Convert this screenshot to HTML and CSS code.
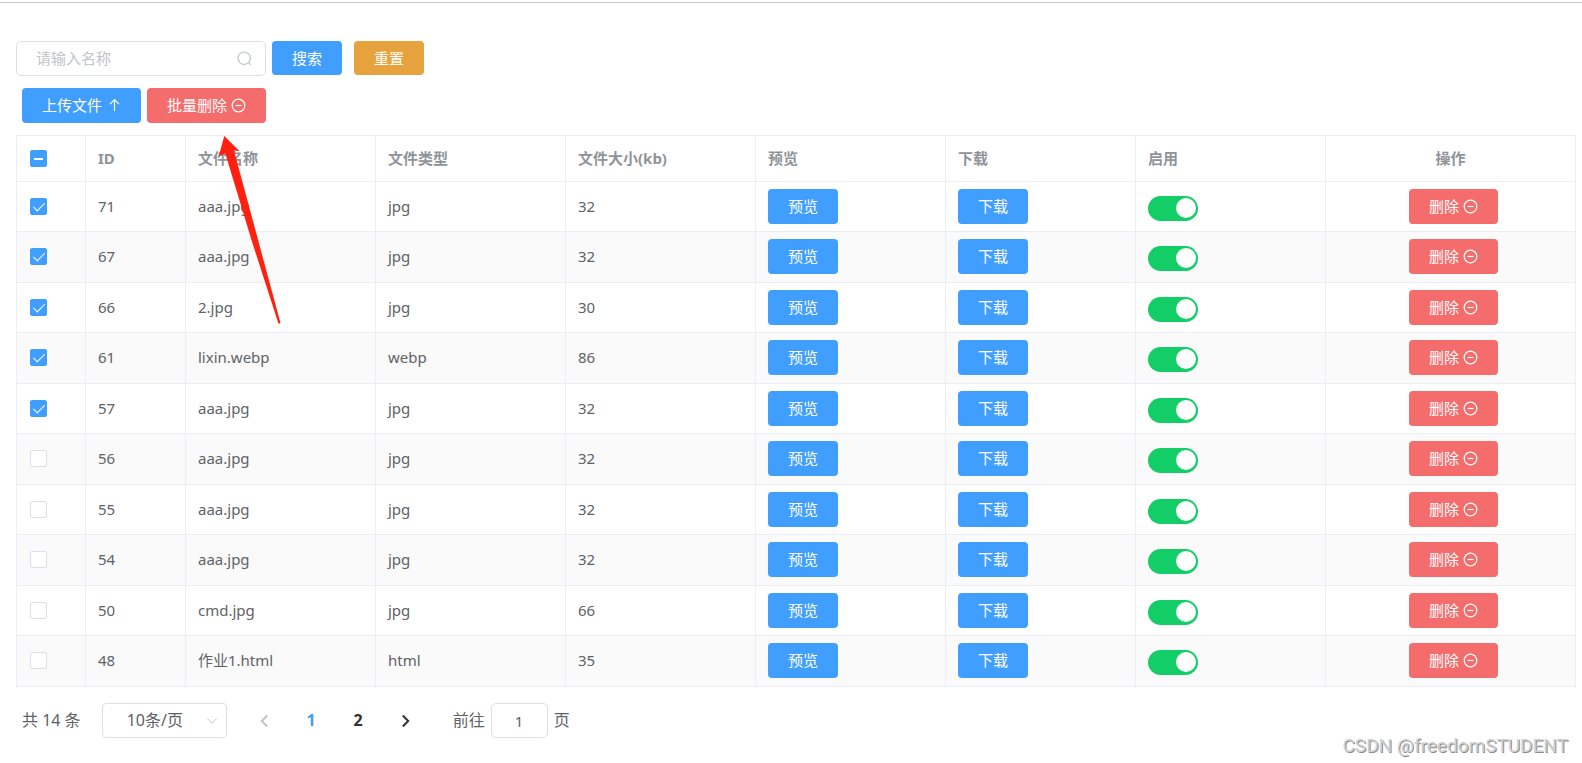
FILE: index.html
```html
<!DOCTYPE html>
<html lang="zh-CN">
<head>
<meta charset="utf-8">
<title>文件管理</title>
<link rel="stylesheet" href="styles.css">
</head>
<body>
<svg class="sprite" aria-hidden="true">
  <symbol id="remove" viewBox="0 0 15 15"><circle cx="7.5" cy="7.5" r="6.3"/><path d="M4.5 7.5h6"/></symbol>
  <symbol id="up" viewBox="0 0 15 15"><path d="M8.5 13V1.8M4 6.2l4.500-4.500L13 6.200"/></symbol>
  <symbol id="search" viewBox="0 0 15 15"><circle cx="7.200" cy="7.200" r="6.200"/><path d="M11.600 11.600l2.200 2.200"/></symbol>
</svg>
<main class="page">
  <form class="toolbar">
    <div class="search">
      <input class="search-input" type="text" placeholder="请输入名称" aria-label="名称">
      <svg class="icon search-icon"><use href="#search"/></svg>
    </div>
    <button class="btn primary" type="button">搜索</button>
    <button class="btn warning" type="button">重置</button>
  </form>
  <div class="actions">
    <button class="btn primary" type="button">上传文件<svg class="icon"><use href="#up"/></svg></button>
    <button class="btn danger" type="button">批量删除<svg class="icon"><use href="#remove"/></svg></button>
  </div>
  <table class="files">
    <colgroup><col class="col-check"><col class="col-id"><col><col><col><col><col><col><col class="col-ops"></colgroup>
    <thead>
      <tr><th><input class="check partial" type="checkbox" aria-label="全选"></th><th>ID</th><th>文件名称</th><th>文件类型</th><th>文件大小(kb)</th><th>预览</th><th>下载</th><th>启用</th><th class="ops-head">操作</th></tr>
    </thead>
    <tbody>
      <tr><td><input class="check" type="checkbox" aria-label="选择 71" checked></td><td>71</td><td>aaa.jpg</td><td>jpg</td><td>32</td><td><button class="btn primary" type="button">预览</button></td><td><button class="btn primary" type="button">下载</button></td><td><input class="switch" type="checkbox" aria-label="启用 71" checked></td><td class="ops"><button class="btn danger" type="button">删除<svg class="icon"><use href="#remove"/></svg></button></td></tr>
      <tr><td><input class="check" type="checkbox" aria-label="选择 67" checked></td><td>67</td><td>aaa.jpg</td><td>jpg</td><td>32</td><td><button class="btn primary" type="button">预览</button></td><td><button class="btn primary" type="button">下载</button></td><td><input class="switch" type="checkbox" aria-label="启用 67" checked></td><td class="ops"><button class="btn danger" type="button">删除<svg class="icon"><use href="#remove"/></svg></button></td></tr>
      <tr><td><input class="check" type="checkbox" aria-label="选择 66" checked></td><td>66</td><td>2.jpg</td><td>jpg</td><td>30</td><td><button class="btn primary" type="button">预览</button></td><td><button class="btn primary" type="button">下载</button></td><td><input class="switch" type="checkbox" aria-label="启用 66" checked></td><td class="ops"><button class="btn danger" type="button">删除<svg class="icon"><use href="#remove"/></svg></button></td></tr>
      <tr><td><input class="check" type="checkbox" aria-label="选择 61" checked></td><td>61</td><td>lixin.webp</td><td>webp</td><td>86</td><td><button class="btn primary" type="button">预览</button></td><td><button class="btn primary" type="button">下载</button></td><td><input class="switch" type="checkbox" aria-label="启用 61" checked></td><td class="ops"><button class="btn danger" type="button">删除<svg class="icon"><use href="#remove"/></svg></button></td></tr>
      <tr><td><input class="check" type="checkbox" aria-label="选择 57" checked></td><td>57</td><td>aaa.jpg</td><td>jpg</td><td>32</td><td><button class="btn primary" type="button">预览</button></td><td><button class="btn primary" type="button">下载</button></td><td><input class="switch" type="checkbox" aria-label="启用 57" checked></td><td class="ops"><button class="btn danger" type="button">删除<svg class="icon"><use href="#remove"/></svg></button></td></tr>
      <tr><td><input class="check" type="checkbox" aria-label="选择 56"></td><td>56</td><td>aaa.jpg</td><td>jpg</td><td>32</td><td><button class="btn primary" type="button">预览</button></td><td><button class="btn primary" type="button">下载</button></td><td><input class="switch" type="checkbox" aria-label="启用 56" checked></td><td class="ops"><button class="btn danger" type="button">删除<svg class="icon"><use href="#remove"/></svg></button></td></tr>
      <tr><td><input class="check" type="checkbox" aria-label="选择 55"></td><td>55</td><td>aaa.jpg</td><td>jpg</td><td>32</td><td><button class="btn primary" type="button">预览</button></td><td><button class="btn primary" type="button">下载</button></td><td><input class="switch" type="checkbox" aria-label="启用 55" checked></td><td class="ops"><button class="btn danger" type="button">删除<svg class="icon"><use href="#remove"/></svg></button></td></tr>
      <tr><td><input class="check" type="checkbox" aria-label="选择 54"></td><td>54</td><td>aaa.jpg</td><td>jpg</td><td>32</td><td><button class="btn primary" type="button">预览</button></td><td><button class="btn primary" type="button">下载</button></td><td><input class="switch" type="checkbox" aria-label="启用 54" checked></td><td class="ops"><button class="btn danger" type="button">删除<svg class="icon"><use href="#remove"/></svg></button></td></tr>
      <tr><td><input class="check" type="checkbox" aria-label="选择 50"></td><td>50</td><td>cmd.jpg</td><td>jpg</td><td>66</td><td><button class="btn primary" type="button">预览</button></td><td><button class="btn primary" type="button">下载</button></td><td><input class="switch" type="checkbox" aria-label="启用 50" checked></td><td class="ops"><button class="btn danger" type="button">删除<svg class="icon"><use href="#remove"/></svg></button></td></tr>
      <tr><td><input class="check" type="checkbox" aria-label="选择 48"></td><td>48</td><td>作业1.html</td><td>html</td><td>35</td><td><button class="btn primary" type="button">预览</button></td><td><button class="btn primary" type="button">下载</button></td><td><input class="switch" type="checkbox" aria-label="启用 48" checked></td><td class="ops"><button class="btn danger" type="button">删除<svg class="icon"><use href="#remove"/></svg></button></td></tr>
    </tbody>
  </table>
  <nav class="pager" aria-label="分页">
    <span>共 14 条</span>
    <div class="size">
      <select class="size-select" aria-label="每页条数"><option>10条/页</option></select>
      <svg class="size-arrow" viewBox="0 0 12 8"><path d="M1 1.2l5 5 5-5"/></svg>
    </div>
    <div class="pages">
      <button class="page-btn" type="button" aria-label="上一页" disabled><svg class="chevron" viewBox="0 0 9 14"><path d="M7.200 1.500L1.800 7l5.400 5.500"/></svg></button>
      <button class="page-btn current" type="button">1</button>
      <button class="page-btn" type="button">2</button>
      <button class="page-btn" type="button" aria-label="下一页"><svg class="chevron" viewBox="0 0 9 14"><path d="M1.800 1.500L7.200 7l-5.400 5.500"/></svg></button>
    </div>
    <label class="jump">前往<input class="jump-input" type="text" value="1">页</label>
  </nav>
</main>
<svg class="pointer" viewBox="0 0 64 190" aria-hidden="true"><path d="M6.300 1L21.500 16.300 16 15.500 39.800 104 62.500 188l-2 .8L33.500 105 7.300 18.500.8 21z"/></svg>
<div class="watermark">CSDN @freedomSTUDENT</div>
</body>
</html>
```
FILE: styles.css
```css
* { box-sizing: border-box; }
body {
  margin: 0;
  background: #fff;
  color: #606266;
  font: 15px/23px "Noto Sans", "Noto Sans CJK SC", sans-serif;
}
input, button, select { font: inherit; color: inherit; margin: 0; }
.sprite { position: absolute; width: 0; height: 0; }
.page {
  margin-top: 2px;
  border-top: 1px solid #c8c9cc;
  padding: 38px 6px 24px 16px;
}
.icon {
  width: 15px;
  height: 15px;
  fill: none;
  stroke: currentColor;
  stroke-width: 1.2;
}
.toolbar { display: flex; align-items: flex-start; }
.toolbar .btn { height: 34px; }
.search { position: relative; width: 250px; margin-right: 6px; }
.search-input {
  display: block;
  width: 100%;
  height: 35px;
  padding: 0 38px 2px 19px;
  border: 1px solid #dcdfe6;
  border-radius: 5px;
  background: #fff;
  outline: none;
}
.search-input::placeholder { color: #c0c4cc; opacity: 1; }
.search-icon { position: absolute; right: 14px; top: 10px; color: #c0c4cc; }
.btn {
  display: inline-flex;
  align-items: center;
  gap: 4px;
  height: 35px;
  padding: 0 20px;
  border: 0;
  border-radius: 4px;
  color: #fff;
  line-height: 23px;
  white-space: nowrap;
  vertical-align: middle;
}
.primary { background: #409eff; }
.warning { background: #e6a23c; margin-left: 12px; }
.danger { background: #f56c6c; }
.actions { display: flex; gap: 6px; padding: 12px 0 12px 6px; }

.files {
  width: 100%;
  table-layout: fixed;
  border-collapse: separate;
  border-spacing: 0;
  border: solid #ebeef5;
  border-width: 1px 0 0 1px;
}
.col-check { width: 69px; }
.col-id { width: 100px; }
.col-ops { width: 250px; }
.files th, .files td {
  height: 50px;
  padding: 0 12px;
  border: solid #ebeef5;
  border-width: 0 1px 1px 0;
  text-align: left;
}
.files th { height: 46px; color: #909399; font-weight: 700; }
.files tr > :first-child { padding-left: 13px; }
.files tbody tr:nth-child(even) td { height: 51px; padding-bottom: 1px; background: #fafafa; }
.files .ops-head { text-align: center; }
.files .ops { text-align: center; padding-left: 18px; }
.check {
  appearance: none;
  display: block;
  width: 17px;
  height: 17px;
  border: 1px solid #dcdfe6;
  border-radius: 2px;
  background: #fff;
}
.check:checked, .check.partial { border-color: #409eff; background: #409eff; }
.check:checked::after {
  content: "";
  display: block;
  width: 5px;
  height: 10px;
  margin: 1px 0 0 5px;
  border: solid #fff;
  border-width: 0 1px 1px 0;
  transform: rotate(45deg);
}
.check.partial::after {
  content: "";
  display: block;
  width: 9px;
  height: 2px;
  margin: 7px 0 0 3px;
  background: #fff;
}
.switch {
  appearance: none;
  display: block;
  width: 50px;
  height: 25px;
  margin-top: 4px;
  padding: 2px;
  border-radius: 13px;
  background: #13ce66;
}
.switch::after {
  content: "";
  display: block;
  width: 20px;
  height: 20px;
  margin-left: 26px;
  border-radius: 50%;
  background: #fff;
}

.pager {
  display: flex;
  align-items: center;
  padding: 16px 0 0 6px;
  font-size: 16px;
}
.size { position: relative; width: 125px; margin-left: 21px; }
.size-select {
  appearance: none;
  display: block;
  width: 100%;
  height: 35px;
  padding: 0 30px 0 24px;
  border: 1px solid #dcdfe6;
  border-radius: 4px;
  background: #fff;
}
.size-arrow {
  position: absolute;
  right: 9px;
  top: 14px;
  width: 12px;
  height: 8px;
  fill: none;
  stroke: #c0c4cc;
}
.pages { display: flex; gap: 2px; margin-left: 15px; }
.page-btn {
  display: flex;
  align-items: center;
  justify-content: center;
  width: 45px;
  height: 35px;
  padding: 0;
  border: 0;
  background: none;
  color: #303133;
  font-weight: 700;
}
.page-btn:disabled { color: #c0c4cc; }
.page-btn.current { color: #409eff; }
.chevron { width: 9px; height: 14px; fill: none; stroke: currentColor; stroke-width: 2; }
.jump { display: flex; align-items: center; margin-left: 25px; }
.jump-input {
  width: 57px;
  height: 35px;
  margin: 0 6px;
  padding: 0;
  border: 1px solid #dcdfe6;
  border-radius: 5px;
  font-size: 15px;
  text-align: center;
}

.pointer {
  position: absolute;
  left: 218px;
  top: 135px;
  width: 64px;
  height: 190px;
  fill: #ff2010;
  pointer-events: none;
}
.watermark {
  position: absolute;
  right: 14px;
  bottom: 5px;
  color: #d0d0d0;
  font: 19px/24px Roboto, sans-serif;
  text-shadow: 1px 1px 0 #8c8c8c;
}
```
